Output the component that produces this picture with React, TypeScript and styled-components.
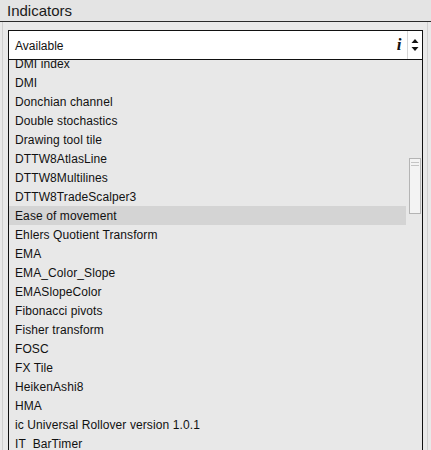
import React from "react";
import styled, { createGlobalStyle } from "styled-components";

const indicators = [
  "DMI index",
  "DMI",
  "Donchian channel",
  "Double stochastics",
  "Drawing tool tile",
  "DTTW8AtlasLine",
  "DTTW8Multilines",
  "DTTW8TradeScalper3",
  "Ease of movement",
  "Ehlers Quotient Transform",
  "EMA",
  "EMA_Color_Slope",
  "EMASlopeColor",
  "Fibonacci pivots",
  "Fisher transform",
  "FOSC",
  "FX Tile",
  "HeikenAshi8",
  "HMA",
  "ic Universal Rollover version 1.0.1",
  "IT_BarTimer",
  "Jurik",
];

const selecionado = "Ease of movement";

export default function App() {
  return (
    <>
      <GlobalStyle />
      <Janela>
        <Titulo>Indicators</Titulo>
        <Painel>
          <Caixa>
            <Cabecalho>
              <CabecalhoTexto>Available</CabecalhoTexto>
              <InfoIcone>i</InfoIcone>
              <Ordenar>
                <svg width="8" height="16" viewBox="0 0 8 16">
                  <path d="M4 2 L7.5 6 L0.5 6 Z" fill="#111" />
                  <path d="M4 14 L7.5 10 L0.5 10 Z" fill="#111" />
                </svg>
              </Ordenar>
            </Cabecalho>
            <Lista>
              <ListaInterna>
                {indicators.map((nome) => (
                  <Linha key={nome} $ativo={nome === selecionado}>
                    {nome}
                  </Linha>
                ))}
              </ListaInterna>
              <BarraRolagem>
                <Grip />
                <Grip />
              </BarraRolagem>
            </Lista>
          </Caixa>
        </Painel>
      </Janela>
    </>
  );
}

// Estilização
const GlobalStyle = createGlobalStyle`
  html, body {
    margin: 0;
    padding: 0;
    background: #e9e9e9;
  }
  body {
    font-family: "Liberation Sans", Arial, sans-serif;
  }
`;

const Janela = styled.div`
  width: 431px;
  height: 450px;
  overflow: hidden;
  display: flex;
  flex-direction: column;
  background: #e9e9e9;
`;

const Titulo = styled.div`
  height: 22px;
  flex: none;
  box-sizing: border-box;
  padding: 2px 0 0 7px;
  font-size: 15px;
  color: #1a1a1a;
  background: #e4e4e4;
  border-bottom: 1px solid #2a2a2a;
`;

const Painel = styled.div`
  flex: 1;
  min-height: 0;
  display: flex;
  margin: 0 3px 0 2px;
  padding: 8px 4px 0 5px;
  border-left: 1px solid #cfcfcf;
  border-right: 1px solid #d0d0d0;
`;

const Caixa = styled.div`
  flex: 1;
  display: flex;
  flex-direction: column;
  border: 1px solid #111;
  border-bottom: none;
  background: #e8e8e8;
  min-height: 0;
`;

const Cabecalho = styled.div`
  height: 28px;
  flex: none;
  display: flex;
  align-items: center;
  background: #fff;
  border-bottom: 1px solid #111;
`;

const CabecalhoTexto = styled.div`
  flex: 1;
  padding-left: 6px;
  padding-top: 2px;
  font-size: 12px;
  color: #111;
`;

const InfoIcone = styled.div`
  width: 14px;
  font-family: "Liberation Serif", "Times New Roman", serif;
  font-style: italic;
  font-weight: bold;
  font-size: 17px;
  color: #111;
  text-align: center;
  margin-right: 1px;
`;

const Ordenar = styled.div`
  width: 14px;
  height: 100%;
  display: flex;
  align-items: center;
  justify-content: center;
  border-left: 1px solid #d6d6d6;
`;

const Lista = styled.div`
  flex: 1;
  position: relative;
  overflow: hidden;
`;

const ListaInterna = styled.div`
  margin-top: -6px;
  padding-right: 16px;
`;

const Linha = styled.div<{ $ativo: boolean }>`
  height: 19px;
  box-sizing: border-box;
  padding: 2px 0 0 6px;
  line-height: 17px;
  font-size: 12px;
  letter-spacing: 0.1px;
  color: #111;
  white-space: nowrap;
  background: ${(p) => (p.$ativo ? "#d4d4d4" : "transparent")};
`;

const BarraRolagem = styled.div`
  position: absolute;
  right: 1px;
  top: 98px;
  width: 12px;
  height: 56px;
  box-sizing: border-box;
  background: #f3f3f3;
  border: 1px solid #b4b4b4;
  padding: 3px 1px 0;
  display: flex;
  flex-direction: column;
  gap: 2px;
`;

const Grip = styled.div`
  height: 1px;
  background: #c4c4c4;
`;
